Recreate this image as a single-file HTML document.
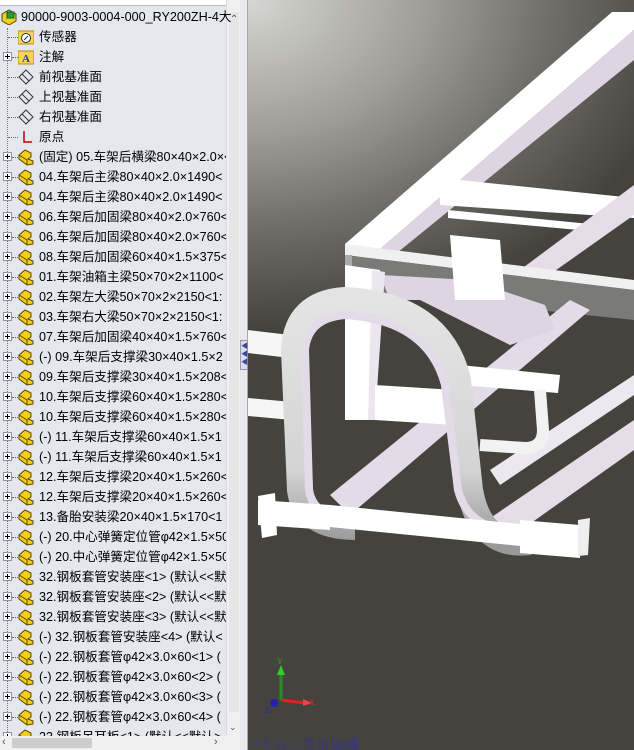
<!DOCTYPE html>
<html><head><meta charset="utf-8"><style>
*{margin:0;padding:0;box-sizing:border-box}
body{width:634px;height:750px;overflow:hidden;position:relative;background:#fff;font-family:"Liberation Sans","Noto Sans CJK SC",sans-serif;font-size:12.6px}
#tree{position:absolute;left:0;top:0;width:226px;height:736px;background:#e4e7ee;overflow:hidden}
.row{position:absolute;left:0;height:20px;width:226px;white-space:nowrap;line-height:20px;color:#000}
.row .t{position:absolute;left:39px;top:0}
.pl{position:absolute;left:3px;top:5px;width:9px;height:9px;border:1px solid #8a94a6;background:#fff}
.pl:before{content:"";position:absolute;left:1px;top:3px;width:5px;height:1px;background:#000}
.pl:after{content:"";position:absolute;left:3px;top:1px;width:1px;height:5px;background:#000}
.dl{position:absolute;left:12px;top:10px;width:6px;border-top:1px dotted #666}
.ic{position:absolute;left:18px;top:2px}
#vl{position:absolute;left:7px;top:28px;width:0;height:710px;border-left:1px dotted #777}
#vs{position:absolute;left:226px;top:0;width:14px;height:736px;background:#f0f0f0;border-left:1px solid #dcdcdc}
#hs{position:absolute;left:0;top:736px;width:240px;height:14px;background:#f0f0f0}
#split{position:absolute;left:240px;top:0;width:8px;height:750px;background:#e9e9ec;border-right:1px solid #aaa}
#view{position:absolute;left:248px;top:0;width:386px;height:750px;background:radial-gradient(ellipse 440px 330px at 0px 0px,#d6d6d2 0%,#a09e98 40%,#6e6c66 70%,#45433e 100%);overflow:hidden}
</style></head><body>
<div id="tree">
<div style="position:absolute;left:0;top:0;width:226px;height:6px;background:#fff;border-bottom:1px solid #bbb"></div>
<div id="vl"></div>
</div>
<div id="vs">
<div style="position:absolute;left:2px;top:12px;width:10px;height:700px;background:#e6e6e6"></div>
<div style="position:absolute;left:3px;top:14px;font-size:10px;color:#555">&#8963;</div>
<div style="position:absolute;left:2px;top:722px;font-size:9px;color:#555">&#8964;</div>
</div>
<div id="hs"><div style="position:absolute;left:12px;top:2px;width:80px;height:10px;background:#cdcdcd"></div>
<div style="position:absolute;left:2px;top:0;font-size:11px;color:#555">&lsaquo;</div>
<div style="position:absolute;left:214px;top:0;font-size:11px;color:#555">&rsaquo;</div></div>
<div id="split"><div style="position:absolute;left:0;top:340px;width:8px;height:30px;background:#d8dcee;border:1px solid #99a"></div>
<div style="position:absolute;left:1px;top:343px;font-size:7px;line-height:8px;color:#3a4a9a">&#9664;<br>&#9664;<br>&#9664;</div></div>
<div id="view">
<svg width="386" height="750" viewBox="248 0 386 750" style="position:absolute;left:0;top:0">
<defs><linearGradient id="g1" x1="0" y1="0" x2="0" y2="1"><stop offset="0" stop-color="#e4e4e4"/><stop offset="0.7" stop-color="#d4d4d4"/><stop offset="1" stop-color="#999"/></linearGradient></defs>
<!-- long diagonal rail -->
<polygon points="345,244 612,12 634,12 634,30 365,262" fill="#fff"/>
<polygon points="365,262 634,30 634,60 376,270" fill="#ded4e2"/>
<!-- cross beam top -->
<polygon points="440,178 634,198 634,218 440,205" fill="#fff"/>
<polygon points="448,210 600,225 600,232 448,218" fill="#fff"/>
<polygon points="520,270 634,185 634,215 535,285" fill="#e6dde8"/>
<!-- horizontal gray beam -->
<polygon points="345,244 634,280 634,290 345,255" fill="#f0f0f0"/>
<polygon points="345,255 634,290 634,320 345,290" fill="#7a7a78"/>
<polygon points="345,255 352,255 352,290 345,290" fill="#aaa"/>
<!-- left pipes -->
<polygon points="248,330 290,335 290,358 248,353" fill="#f6f6f6"/>
<polygon points="248,398 292,402 292,420 248,416" fill="#f6f6f6"/>
<!-- diagonal lower rails -->
<polygon points="330,495 570,300 590,310 350,515" fill="#e4dbe8"/>
<polygon points="480,525 634,420 634,450 500,545" fill="#e6dde8"/>
<polygon points="490,470 634,375 634,395 500,485" fill="#ede7ef"/>
<!-- central bracket -->
<polygon points="380,275 470,280 545,305 555,330 510,345 460,320 420,300 390,300" fill="#ded4e2"/>
<polygon points="450,235 500,240 505,300 455,300" fill="#fff"/>
<polygon points="345,265 380,270 375,420 345,420" fill="#fff"/>
<polygon points="372,270 385,272 375,420 368,420" fill="#ece6ef"/>
<polygon points="375,385 455,390 455,425 375,420" fill="#fff"/>
<!-- right pipes -->
<polygon points="460,365 560,375 558,393 460,385" fill="#fff"/>
<path d="M540,390 L543,430 Q543,448 525,448 L480,445" fill="none" stroke="#f2f2f2" stroke-width="12"/>
<!-- big arch spring -->
<path d="M355,527 Q305,527 300,490 L294,350 Q296,303 345,300 Q440,305 458,380 L470,490 Q480,548 530,542" fill="none" stroke="url(#g1)" stroke-width="26"/>
<path d="M352,518 Q313,518 309,490 L305,350 Q308,318 345,315 Q428,320 445,385 L458,490 Q470,535 528,530" fill="none" stroke="#e4dbe8" stroke-width="8"/>
<!-- bottom crossbeam -->
<polygon points="330,505 580,530 580,552 330,527" fill="#fff"/>
<polygon points="258,500 330,505 330,530 258,525" fill="#fff"/>
<polygon points="258,496 275,493 277,535 262,538" fill="#fff"/>
<polygon points="520,520 580,525 580,558 520,553" fill="#fff"/>
<polygon points="578,520 590,518 588,555 578,556" fill="#eee"/>
<!-- triad -->
<line x1="281" y1="700" x2="281" y2="672" stroke="#2a8a2a" stroke-width="3"/>
<polygon points="277,675 281,665 285,675" fill="#3c3"/>
<line x1="281" y1="700" x2="305" y2="703" stroke="#d22" stroke-width="3"/>
<polygon points="303,699 312,703 303,706" fill="#e44"/>
<circle cx="274" cy="703" r="4" fill="#22a"/>
<text x="277" y="664" font-size="8" fill="#2a2" font-family="Liberation Serif">Y</text>
<text x="309" y="705" font-size="8" fill="#e22" font-family="Liberation Serif">X</text>
<text x="265" y="713" font-size="8" fill="#22c" font-family="Liberation Serif">Z</text>
</svg>
<div style="position:absolute;left:5px;top:735px;font-size:14px;font-weight:bold;color:#3a3a72;font-family:'Liberation Serif','Noto Serif CJK SC',serif">*左右二等角轴测</div>
</div>
<svg width="0" height="0" style="position:absolute">
<defs>
<g id="part"><path d="M1,6 L7,1 L13,4 L13,8 L10,10 L15,12 L15,15 L9,16 L1,10 Z" fill="#f2cd1a" stroke="#5a4600" stroke-width="1"/><path d="M1,6 L9,11 L9,16" fill="none" stroke="#5a4600" stroke-width="1"/></g>
</defs></svg>
<div style="position:absolute;left:0;top:0">
<div class="row" style="top:7px"><svg class="ic" style="left:1px;top:2px" width="16" height="16"><path d="M1,5 L8,1 L15,5 L15,12 L8,16 L1,12Z" fill="#f2cd1a" stroke="#5a4600"/><rect x="6" y="3" width="7" height="6" fill="#2c9a2c" stroke="#064"/></svg><span class="t" style="left:21px">90000-9003-0004-000_RY200ZH-4大</span></div>
<div class="row" style="top:27px"><div class="dl" style="left:8px;width:10px"></div><svg class="ic" width="16" height="16"><rect x="0" y="2" width="16" height="13" fill="#f7d35a" stroke="#b88a10"/><circle cx="8" cy="9" r="4.5" fill="#fff" stroke="#234"/><line x1="6" y1="11" x2="10" y2="7" stroke="#234"/></svg><span class="t">传感器</span></div>
<div class="row" style="top:47px"><div class="pl"></div><div class="dl"></div><svg class="ic" width="16" height="16"><rect x="0" y="2" width="16" height="13" fill="#f7d35a" stroke="#b88a10"/><text x="4" y="13" font-size="11" font-weight="bold" fill="#2a3aa0" font-family="Liberation Serif">A</text></svg><span class="t">注解</span></div>
<div class="row" style="top:67px"><div class="dl" style="left:8px;width:10px"></div><svg class="ic" width="16" height="16"><path d="M1,8 L8,1 L15,8 L8,15Z M4,5 L11,12" fill="none" stroke="#333"/></svg><span class="t">前视基准面</span></div>
<div class="row" style="top:87px"><div class="dl" style="left:8px;width:10px"></div><svg class="ic" width="16" height="16"><path d="M1,8 L8,1 L15,8 L8,15Z M4,5 L11,12" fill="none" stroke="#333"/></svg><span class="t">上视基准面</span></div>
<div class="row" style="top:107px"><div class="dl" style="left:8px;width:10px"></div><svg class="ic" width="16" height="16"><path d="M1,8 L8,1 L15,8 L8,15Z M4,5 L11,12" fill="none" stroke="#333"/></svg><span class="t">右视基准面</span></div>
<div class="row" style="top:127px"><div class="dl" style="left:8px;width:10px"></div><svg class="ic" width="16" height="16"><path d="M6,2 L6,13 L14,13" fill="none" stroke="#b00" stroke-width="1.5"/></svg><span class="t">原点</span></div>
</div>
<div id="parts"></div>
<script>
var L=["(固定) 05.车架后横梁80×40×2.0×<","04.车架后主梁80×40×2.0×1490<","04.车架后主梁80×40×2.0×1490<","06.车架后加固梁80×40×2.0×760<","06.车架后加固梁80×40×2.0×760<","08.车架后加固梁60×40×1.5×375<","01.车架油箱主梁50×70×2×1100<","02.车架左大梁50×70×2×2150<1:","03.车架右大梁50×70×2×2150<1:","07.车架后加固梁40×40×1.5×760<","(-) 09.车架后支撑梁30×40×1.5×2","09.车架后支撑梁30×40×1.5×208<","10.车架后支撑梁60×40×1.5×280<","10.车架后支撑梁60×40×1.5×280<","(-) 11.车架后支撑梁60×40×1.5×1","(-) 11.车架后支撑梁60×40×1.5×1","12.车架后支撑梁20×40×1.5×260<","12.车架后支撑梁20×40×1.5×260<","13.备胎安装梁20×40×1.5×170<1","(-) 20.中心弹簧定位管φ42×1.5×50","(-) 20.中心弹簧定位管φ42×1.5×50","32.钢板套管安装座<1> (默认<<默","32.钢板套管安装座<2> (默认<<默","32.钢板套管安装座<3> (默认<<默","(-) 32.钢板套管安装座<4> (默认<","(-) 22.钢板套管φ42×3.0×60<1> (","(-) 22.钢板套管φ42×3.0×60<2> (","(-) 22.钢板套管φ42×3.0×60<3> (","(-) 22.钢板套管φ42×3.0×60<4> (","23.钢板吊耳板<1> (默认<<默认>"];
var h='';for(var i=0;i<L.length;i++){h+='<div class="row" style="top:'+(147+i*20)+'px"><div class="pl"></div><div class="dl"></div><svg class="ic" width="17" height="17"><use href="#part"/></svg><span class="t">'+L[i]+'</span></div>';}
document.getElementById('parts').innerHTML='<div style="position:absolute;left:0;top:0;width:226px;height:736px;overflow:hidden">'+h+'</div>';
</script>
</body></html>
